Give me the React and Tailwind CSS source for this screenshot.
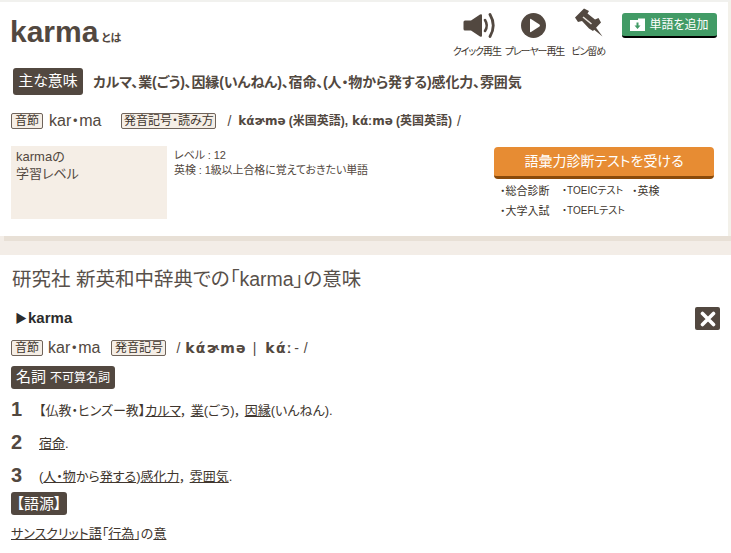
import React from 'react';

const Tag = ({ children, className = '' }) => (
  <span className={`inline-flex items-center justify-center h-[16px] border border-[#6f635a] bg-[#f5eee6] rounded-[2px] text-[12px] leading-none text-[#40362e] whitespace-nowrap ${className}`}>
    {children}
  </span>
);

const DarkTag = ({ children, className = '' }) => (
  <div className={`inline-flex items-center bg-[#524840] text-white rounded-[3px] whitespace-nowrap ${className}`}>
    {children}
  </div>
);

const Speaker = () => (
  <svg width="33" height="25" viewBox="0 0 33 25" fill="none" className="translate-x-[3px]">
    <path d="M0.5 9 Q0.5 7.5 2 7.5 H8 L17 1.5 Q19 0.5 19 2.5 V22.5 Q19 24.5 17 23.5 L8 17.5 H2 Q0.5 17.5 0.5 16 Z" fill="#524840" />
    <path d="M22 7 Q25.5 12.5 22 18" stroke="#524840" strokeWidth="2.6" strokeLinecap="round" />
    <path d="M27 1.5 Q33.5 12.5 27 23.5" stroke="#524840" strokeWidth="2.8" strokeLinecap="round" />
  </svg>
);

const Play = () => (
  <svg width="25" height="25" viewBox="0 0 25 25" className="-translate-x-[1px]">
    <circle cx="12.5" cy="12.5" r="12.5" fill="#524840" />
    <path d="M9 6.5 Q9 5.5 10 6 L18.5 11.5 Q19.5 12.5 18.5 13.5 L10 19 Q9 19.5 9 18.5 Z" fill="#fff" />
  </svg>
);

const Pin = () => (
  <svg width="29" height="29" viewBox="0 0 29 29" className="-translate-y-[1px]">
    <path d="M10 0.5 L15 3 L13.5 5.5 L21 11.5 L24.5 10 L27 14.5 L19 23 L15 20.5 L8 13 L4 14 L1 9.5 Z" fill="#524840" />
    <path d="M18 20 L28.5 28.5 L20.5 17.5 Z" fill="#524840" />
    <path d="M9 9 L17.5 16" stroke="#e9e4de" strokeWidth="1.6" />
  </svg>
);

const Folder = () => (
  <svg width="15" height="13" viewBox="0 0 15 13">
    <path d="M0 2 H8 V0.5 H15 V13 H0 Z" fill="#fff" />
    <path d="M6.5 4.5 H8.5 V7.5 H10.5 L7.5 11 L4.5 7.5 H6.5 Z" fill="#429b66" />
  </svg>
);

const IconItem = ({ icon, label, className = '' }) => (
  <div className={`flex flex-col items-center ${className}`}>
    <div className="h-[29px] flex items-end justify-center">{icon}</div>
    <span className="mt-[8px] text-[10px] leading-[12px] tracking-[-1.1px] text-[#40362e] whitespace-nowrap">{label}</span>
  </div>
);

const Pron = ({ children, className = '' }) => (
  <span className={`font-bold font-['DejaVu_Sans','Noto_Sans_CJK_JP',sans-serif] ${className}`}>{children}</span>
);

const App = () => {
  return (
    <div className="w-[731px] h-[553px] overflow-hidden bg-white text-[#524840] font-['Liberation_Sans','Noto_Sans_CJK_JP',sans-serif] [font-feature-settings:'palt']">
      <div className="h-[255px] bg-[#f3ede7] flex flex-col">
        <div className="h-[236px] bg-white border-t-2 border-[#f1f1ee] border-r-[3px] border-r-[#f3f1ea] pl-[11px] pr-[14px] flex flex-col">
          <div className="h-[64px] flex justify-between">
            <div className="flex items-baseline pt-[11px] -ml-[1px]">
              <span className="text-[30px] leading-[38px] font-bold">karma</span>
              <span className="ml-[3px] text-[11px] font-bold">とは</span>
            </div>
            <div className="flex items-start -mr-[3px]">
              <div className="flex pt-[7px]">
                <IconItem icon={<Speaker />} label="クイック再生" />
                <IconItem icon={<Play />} label="プレーヤー再生" className="ml-[4px]" />
                <IconItem icon={<Pin />} label="ピン留め" className="ml-[7px]" />
              </div>
              <div className="ml-[17px] mt-[11px] w-[95px] h-[25px] bg-[#429b66] border-b-2 border-black rounded-[3px] flex items-center justify-center gap-[4px] text-white text-[12px]">
                <Folder />
                単語を追加
              </div>
            </div>
          </div>

          <div className="flex items-center mt-[2px] ml-[2px]">
            <DarkTag className="h-[27px] w-[70px] justify-center text-[15px]">主な意味</DarkTag>
            <span className="ml-[10px] pt-[2px] text-[14px] font-bold tracking-[-0.15px]">カルマ、業(ごう)、因縁(いんねん)、宿命、(人・物から発する)感化力、雰囲気</span>
          </div>

          <div className="flex items-center mt-[17px] h-[18px]">
            <Tag className="w-[32px]">音節</Tag>
            <span className="ml-[6px] text-[16px]">kar・ma</span>
            <Tag className="ml-[20px] w-[95px]">発音記号・読み方</Tag>
            <span className="ml-[11px] text-[14px]">/</span>
            <Pron className="ml-[7px] text-[12px]">kάɚmə</Pron>
            <span className="ml-[3px] text-[12px] font-bold">(米国英語),</span>
            <Pron className="ml-[4px] text-[12px]">kάːmə</Pron>
            <span className="ml-[3px] text-[12px] font-bold">(英国英語)</span>
            <span className="ml-[5px] text-[14px]">/</span>
          </div>

          <div className="flex mt-[16px]">
            <div className="w-[156px] h-[73px] bg-[#f5eee6] px-[5px] pt-[2px] text-[13px] leading-[17px]">
              karmaの<br />学習レベル
            </div>
            <div className="ml-[7px] pt-[2px] text-[11px] leading-[15px] flex-1 tracking-[-0.1px]">
              レベル : 12<br />英検 : 1級以上合格に覚えておきたい単語
            </div>
            <div className="w-[220px] mt-[1px]">
              <div className="h-[32px] bg-[#e78c33] border-b-[3px] border-[#8a4a0a] rounded-[4px] flex items-center justify-center text-white text-[14px]">
                語彙力診断テストを受ける
              </div>
              <div className="mt-[2px] pl-[6px] grid grid-cols-[62px_70px_1fr] text-[11px] leading-[20px] text-[#40362e] whitespace-nowrap">
                <span>・総合診断</span>
                <span className="text-[10px]">・TOEICテスト</span>
                <span>・英検</span>
                <span>・大学入試</span>
                <span className="text-[10px]">・TOEFLテスト</span>
              </div>
            </div>
          </div>
        </div>
        <div className="h-[5px] ml-[4px] bg-[#e8e0d6]" />
      </div>

      <div className="pl-[11px] pr-[11px]">
        <h2 className="mt-[12px] ml-[1px] text-[19.5px] leading-[24px] font-normal text-[#58504a]">研究社 新英和中辞典での「karma」の意味</h2>

        <div className="mt-[16px] h-[23px] flex items-center justify-between">
          <div className="flex items-center ml-[4px] text-[15px] font-bold text-[#2c2c2c]">
            <span className="text-[12px] mr-[1px]">▶</span>karma
          </div>
          <div className="w-[25px] h-[23px] rounded-[2px] bg-[#524840] flex items-center justify-center">
            <svg width="16" height="16" viewBox="0 0 16 16">
              <path d="M2.5 2.5 L13.5 13.5 M13.5 2.5 L2.5 13.5" stroke="#fff" strokeWidth="3.6" strokeLinecap="round" />
            </svg>
          </div>
        </div>

        <div className="mt-[9px] h-[18px] flex items-center">
          <Tag className="w-[32px]">音節</Tag>
          <span className="ml-[5px] text-[16px]">kar・ma</span>
          <Tag className="ml-[11px] w-[55px]">発音記号</Tag>
          <span className="ml-[10px] text-[14px]">/</span>
          <Pron className="ml-[5px] text-[14px] tracking-[1.2px]">kάɚmə</Pron>
          <span className="ml-[6px] text-[14px]">|</span>
          <Pron className="ml-[9px] text-[14px] tracking-[1.4px]">kάː</Pron>
          <span className="ml-[1px] text-[14px]">-</span>
          <span className="ml-[5px] text-[14px]">/</span>
        </div>

        <DarkTag className="mt-[9px] h-[23px] w-[104px] pl-[5px] text-[15px] flex">
          名詞<span className="ml-[4px] text-[12px]">不可算名詞</span>
        </DarkTag>

        <div className="mt-[9px] flex flex-col gap-[9px] text-[13px] leading-[22px] text-[#40362e]">
          <div className="flex">
            <span className="w-[28px] text-[20px] font-bold text-[#524840]">1</span>
            <span className="pt-[2px]">【仏教・ヒンズー教】<u>カルマ</u>， <u>業</u>(ごう)， <u>因縁</u>(いんねん).</span>
          </div>
          <div className="flex">
            <span className="w-[28px] text-[20px] font-bold text-[#524840]">2</span>
            <span className="pt-[2px]"><u>宿命</u>.</span>
          </div>
          <div className="flex">
            <span className="w-[28px] text-[20px] font-bold text-[#524840]">3</span>
            <span className="pt-[2px]">(<u>人・物</u>から<u>発する</u>)<u>感化力</u>， <u>雰囲気</u>.</span>
          </div>
        </div>

        <DarkTag className="mt-[4px] h-[23px] w-[56px] justify-center text-[15px] flex">【語源】</DarkTag>

        <div className="mt-[8px] text-[13px] leading-[20px] text-[#40362e]">
          <u>サンスクリット語</u>「<u>行為</u>」の<u>意</u>
        </div>
      </div>
    </div>
  );
};

export default App;
